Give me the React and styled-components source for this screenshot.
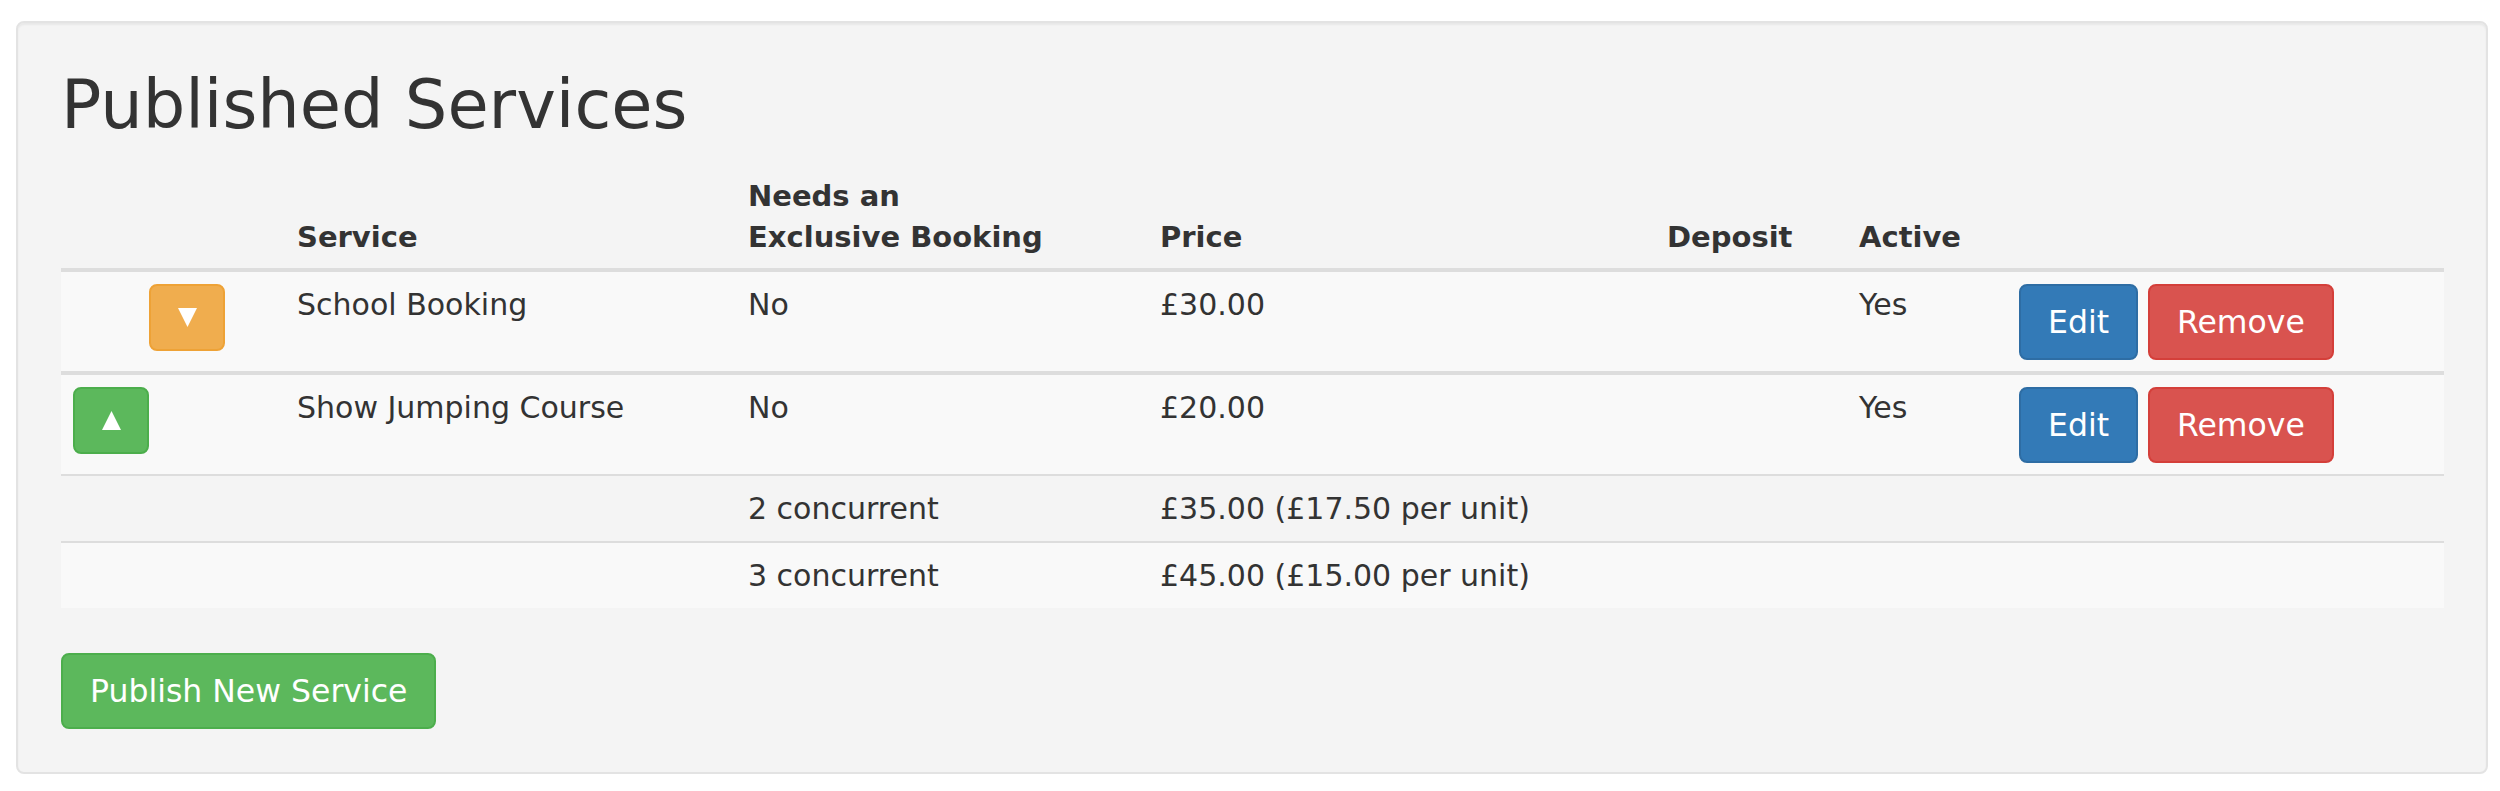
import styled, {createGlobalStyle} from "styled-components";

const GlobalStyle = createGlobalStyle`
  body {
    margin: 0;
    background: #fff;
    color: #333;
    font-family: "DejaVu Sans", Verdana, sans-serif;
  }
`;

const services = [
    {
        name: "School Booking", exclusive: "No", price: "£30.00", active: "Yes",
        up: false, down: true, tiers: [],
    },
    {
        name: "Show Jumping Course", exclusive: "No", price: "£20.00", active: "Yes",
        up: true, down: false,
        tiers: [
            {label: "2 concurrent", price: "£35.00 (£17.50 per unit)"},
            {label: "3 concurrent", price: "£45.00 (£15.00 per unit)"},
        ],
    },
];

const columns = [224, 451, 412, 507, 192, 160, null];

const Triangle = ({down}) => (
    <svg width="19" height="19" viewBox="0 0 19 19">
        <polygon points={down ? "0,0 19,0 9.5,19" : "9.5,0 19,19 0,19"} fill="#fff"/>
    </svg>
);

const App = () => {

    return (
        <>
            <GlobalStyle/>
            <Page>
                <Well>
                    <Title>Published Services</Title>
                    <Table>
                        <colgroup>
                            {columns.map((w, i) => <col key={i} style={w ? {width: w} : undefined}/>)}
                        </colgroup>
                        <thead>
                        <tr>
                            <Th/>
                            <Th>Service</Th>
                            <Th>Needs an<br/>Exclusive Booking</Th>
                            <Th>Price</Th>
                            <Th>Deposit</Th>
                            <Th>Active</Th>
                            <Th/>
                        </tr>
                        </thead>
                        {services.map((s) => (
                            <Body key={s.name}>
                            <Row $striped>
                                <Td>
                                    <Arrows>
                                        {s.up ? <ArrowButton $color="green"><Triangle/></ArrowButton> : <ArrowSlot/>}
                                        {s.down ? <ArrowButton $color="orange"><Triangle down/></ArrowButton> : <ArrowSlot/>}
                                    </Arrows>
                                </Td>
                                <Td>{s.name}</Td>
                                <Td>{s.exclusive}</Td>
                                <Td>{s.price}</Td>
                                <Td/>
                                <Td>{s.active}</Td>
                                <Td>
                                    <Actions>
                                        <Button $variant="primary">Edit</Button>
                                        <Button $variant="danger">Remove</Button>
                                    </Actions>
                                </Td>
                            </Row>
                            {s.tiers.map((t, i) => (
                                <Row key={t.label} $striped={i % 2 === 1}>
                                    <Td/>
                                    <Td/>
                                    <Td>{t.label}</Td>
                                    <Td>{t.price}</Td>
                                    <Td/>
                                    <Td/>
                                    <Td/>
                                </Row>
                            ))}
                            </Body>
                        ))}
                    </Table>
                    <Button $variant="success">Publish New Service</Button>
                </Well>
            </Page>
        </>
    );
};

const Page = styled.div`
  padding: 21px 12px 0 16px;
`;

const Well = styled.section`
  background: #f4f4f4;
  border: 2px solid #e3e3e3;
  border-radius: 8px;
  box-shadow: inset 0 2px 2px rgba(0, 0, 0, 0.05);
  padding: 45px 42px 43px 43px;
`;

const Title = styled.h1`
  margin: 0;
  font-size: 67px;
  font-weight: 400;
  line-height: 74.8px;
  color: #333;
`;

const Table = styled.table`
  width: 100%;
  table-layout: fixed;
  border-collapse: separate;
  border-spacing: 0;
  margin: 21px 0 45px;
  font-size: 30px;
  line-height: 41.6px;
`;

const Th = styled.th`
  text-align: left;
  vertical-align: bottom;
  font-size: 29px;
  font-weight: 700;
  padding: 12px 12px 9.5px;
  border-bottom: 4px solid #ddd;
`;

const Body = styled.tbody`
  & > tr + tr > td {
    border-top: 2px solid #ddd;
  }

  & + & > tr:first-child > td {
    border-top: 4px solid #ddd;
  }
`;

const Row = styled.tr`
  background: ${({$striped}) => $striped ? "#f9f9f9" : "transparent"};
`;

const Td = styled.td`
  vertical-align: top;
  padding: 11.5px 12px;
  white-space: nowrap;
`;

const Arrows = styled.div`
  display: flex;
`;

const ArrowSlot = styled.span`
  width: 76px;
  height: 67px;
`;

const arrowColors = {
    green: {bg: "#5cb85c", border: "#4cae4c"},
    orange: {bg: "#f0ad4e", border: "#eea236"},
};

const ArrowButton = styled.button`
  box-sizing: border-box;
  width: 76px;
  height: 67px;
  display: flex;
  align-items: center;
  justify-content: center;
  padding: 0;
  border-radius: 8px;
  border: 2px solid ${({$color}) => arrowColors[$color].border};
  background: ${({$color}) => arrowColors[$color].bg};
`;

const Actions = styled.div`
  display: flex;
  gap: 10px;
`;

const variants = {
    primary: {bg: "#337ab7", border: "#2e6da4"},
    danger: {bg: "#d9534f", border: "#d43f3a"},
    success: {bg: "#5cb85c", border: "#4cae4c"},
};

const Button = styled.button`
  box-sizing: border-box;
  height: 76px;
  padding: 15px 27px;
  font-family: "DejaVu Sans", Verdana, sans-serif;
  font-size: 31.5px;
  line-height: 42px;
  color: #fff;
  border-radius: 8px;
  border: 2px solid ${({$variant}) => variants[$variant].border};
  background: ${({$variant}) => variants[$variant].bg};
  white-space: nowrap;
`;

export default App;
